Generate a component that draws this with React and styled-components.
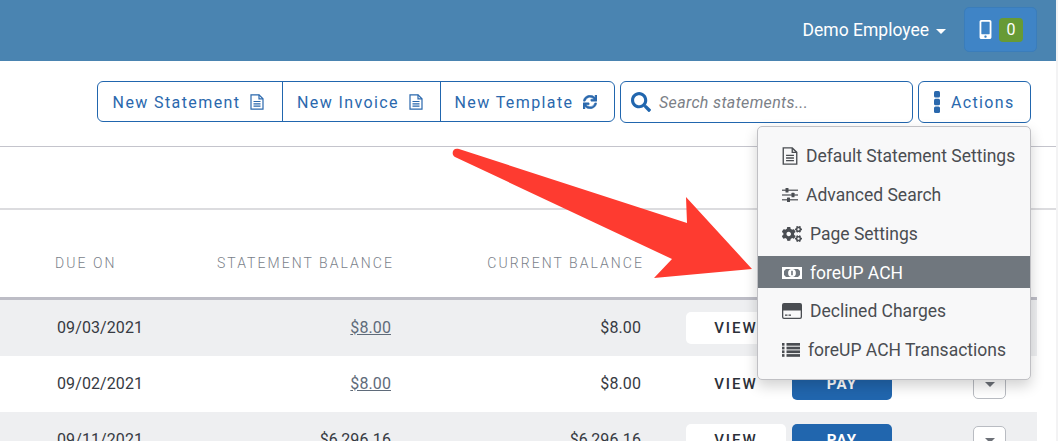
import React from "react";
import styled, { createGlobalStyle } from "styled-components";
import { FaSync, FaSearch, FaMobileAlt, FaCogs } from "react-icons/fa";

const GlobalStyle = createGlobalStyle`
  html, body {
    margin: 0;
    padding: 0;
    background: #fff;
    font-family: Roboto, "Liberation Sans", sans-serif;
    overflow: hidden;
  }
  * { box-sizing: border-box; }
`;

const Page = styled.div`
  position: relative;
  width: 1058px;
  height: 441px;
  overflow: hidden;
  background: #f3f3f4;
`;

const Main = styled.div`
  width: 1056px;
  height: 441px;
  background: #fff;
`;

const TopBar = styled.header`
  display: flex;
  align-items: center;
  justify-content: flex-end;
  height: 61px;
  padding: 0 19px 2px 0;
  background: #4a84b1;
`;

const UserMenu = styled.div`
  display: flex;
  align-items: center;
  gap: 7px;
  margin-right: 18px;
  color: #fff;
  font-size: 17.5px;
`;

const Caret = styled.span`
  width: 0;
  height: 0;
  margin-top: 3px;
  border-left: 5px solid transparent;
  border-right: 5px solid transparent;
  border-top: 5px solid #fff;
`;

const PhoneButton = styled.div`
  display: flex;
  align-items: center;
  width: 73px;
  height: 45px;
  padding-left: 11px;
  gap: 4px;
  color: #fff;
  background: #3f84c6;
  border: 1px solid #3a7dbb;
  border-radius: 5px;
  font-size: 19px;
`;

const CountBadge = styled.span`
  display: flex;
  align-items: center;
  justify-content: center;
  width: 24px;
  height: 24px;
  font-size: 16px;
  background: #679a35;
  border-radius: 4px;
`;

const Toolbar = styled.div`
  display: flex;
  align-items: flex-start;
  height: 86px;
  padding: 20px 0 0 97px;
  border-bottom: 1px solid #c4c4cc;
`;

const ButtonGroup = styled.div`
  display: flex;
  height: 41px;
  border: 1px solid #2166ae;
  border-radius: 6px;
`;

const GroupButton = styled.div`
  display: flex;
  align-items: center;
  justify-content: center;
  gap: 10px;
  width: ${(p) => p.$width}px;
  padding: 1px 3px 0 0;
  color: #2a68ad;
  font-size: 16px;
  letter-spacing: 1.4px;
  & + & { border-left: 1px solid #2166ae; }
  svg { flex: none; }
`;

const SearchBox = styled.div`
  display: flex;
  align-items: center;
  gap: 8px;
  width: 293px;
  height: 42px;
  margin-left: 5px;
  padding-left: 10px;
  color: #7b8087;
  border: 1px solid #2166ae;
  border-radius: 6px;
  font-size: 16px;
  font-style: italic;
  letter-spacing: 0.35px;
  svg { color: #2166ae; font-size: 20px; flex: none; }
`;

const ActionsButton = styled.div`
  display: flex;
  align-items: center;
  gap: 11px;
  width: 113px;
  height: 42px;
  margin-left: 5px;
  padding-left: 15px;
  color: #2a68ad;
  border: 1px solid #2166ae;
  border-radius: 6px;
  font-size: 16px;
  letter-spacing: 1.35px;
  svg { flex: none; }
`;

const Band = styled.div`
  height: 63px;
  border-bottom: 2px solid #dcdcdf;
`;

const HeadRow = styled.div`
  display: grid;
  grid-template-columns: 55px 117px 222px 250px;
  align-items: center;
  width: 1037px;
  height: 90px;
  padding-top: 18px;
  border-bottom: 3px solid #bdbdc6;
  color: #7a7f8a;
  font-size: 14px;
  font-weight: 300;
  letter-spacing: 2.05px;
`;

const HeadCell = styled.div`
  grid-column: ${(p) => p.$col};
  text-align: ${(p) => (p.$right ? "right" : "left")};
  white-space: nowrap;
`;

const Row = styled.div`
  display: grid;
  grid-template-columns: 57px 114px 220px 250px 45px 100px 6px 100px 81px 33px;
  align-items: center;
  width: 1037px;
  height: 56px;
  background: ${(p) => (p.$alt ? "#eeeff1" : "#fff")};
  color: #363a42;
  font-size: 16px;
  letter-spacing: 0.1px;
`;

const DateCell = styled.div`
  grid-column: 2;
  padding-bottom: 2px;
  white-space: nowrap;
`;

const Amount = styled.div`
  grid-column: ${(p) => p.$col};
  padding-bottom: 2px;
  text-align: right;
  color: ${(p) => (p.$link ? "#5f6b7a" : "#363a42")};
  text-decoration: ${(p) => (p.$link ? "underline" : "none")};
`;

const ViewButton = styled.div`
  grid-column: 6;
  display: flex;
  align-items: center;
  justify-content: center;
  height: 32px;
  background: ${(p) => (p.$alt ? "#fff" : "transparent")};
  border-radius: 5px;
  color: #2b3038;
  font-size: 15px;
  font-weight: 500;
  letter-spacing: 2px;
`;

const PayButton = styled.div`
  grid-column: 8;
  display: flex;
  align-items: center;
  justify-content: center;
  height: 32px;
  background: #2166ae;
  border-radius: 5px;
  color: #fff;
  font-size: 15px;
  font-weight: 700;
  letter-spacing: 1.2px;
`;

const MoreButton = styled.div`
  grid-column: 10;
  display: flex;
  align-items: center;
  justify-content: center;
  height: 29px;
  background: #fff;
  border: 1px solid #b9bcc2;
  border-radius: 5px;
`;

const MoreCaret = styled.span`
  width: 0;
  height: 0;
  border-left: 5px solid transparent;
  border-right: 5px solid transparent;
  border-top: 5px solid #6d7178;
`;

const Menu = styled.div`
  position: absolute;
  top: 126px;
  left: 757px;
  display: flex;
  flex-direction: column;
  gap: 7px;
  width: 274px;
  height: 254px;
  padding-top: 12px;
  background: #f8f8f9;
  border: 1px solid #c0c0c4;
  border-radius: 5px;
  box-shadow: 0 6px 14px rgba(0, 0, 0, 0.18);
`;

const MenuItem = styled.div`
  display: flex;
  align-items: center;
  gap: 8px;
  height: 32px;
  padding: 1px 0 0 24px;
  color: ${(p) => (p.$active ? "#fff" : "#4a4d52")};
  background: ${(p) => (p.$active ? "#70777e" : "transparent")};
  font-size: 17.5px;
  white-space: nowrap;
  svg { flex: none; }
  &:nth-child(5) { margin-top: -1px; }
`;

const ArrowSvg = styled.svg`
  position: absolute;
  top: 0;
  left: 0;
  pointer-events: none;
`;

const FileIcon = ({ size = 14, height = 16 }) => (
  <svg width={size} height={height} viewBox="0 0 14 16" fill="none" stroke="currentColor" strokeWidth="1.2">
    <path d="M1 .8h8l4 4v10.4H1z" />
    <path d="M9 .8v4h4" />
    <path d="M3.5 7.5h7M3.5 9.8h7M3.5 12.1h7" />
  </svg>
);

const DotsIcon = () => (
  <svg width="6" height="22" viewBox="0 0 6 22" fill="currentColor">
    <rect width="6" height="6.4" rx="1.5" />
    <rect y="7.8" width="6" height="6.4" rx="1.5" />
    <rect y="15.6" width="6" height="6.4" rx="1.5" />
  </svg>
);

const SlidersIcon = () => (
  <svg width="16" height="14" viewBox="0 0 16 14" fill="currentColor">
    <rect y="1.6" width="16" height="1.2" />
    <rect y="6.4" width="16" height="1.2" />
    <rect y="11.2" width="16" height="1.2" />
    <rect x="3.5" y="0" width="3" height="4.4" rx="0.5" />
    <rect x="9.5" y="4.8" width="3" height="4.4" rx="0.5" />
    <rect x="5" y="9.6" width="3" height="4.4" rx="0.5" />
  </svg>
);

const MoneyIcon = () => (
  <svg width="20" height="12" viewBox="0 0 20 12">
    <rect width="20" height="12" fill="currentColor" />
    <path d="M4 2h12l2 2v4l-2 2H4L2 8V4z" fill="#70777e" />
    <circle cx="10" cy="6" r="3.9" fill="currentColor" />
    <rect x="9.2" y="3.8" width="1.6" height="4.4" fill="#70777e" />
  </svg>
);

const CardIcon = () => (
  <svg width="20" height="16" viewBox="0 0 20 16" fill="currentColor">
    <path fillRule="evenodd" d="M2 0h16a2 2 0 0 1 2 2v12a2 2 0 0 1-2 2H2a2 2 0 0 1-2-2V2a2 2 0 0 1 2-2zm-.7 7.5V14c0 .4.3.7.7.7h16c.4 0 .7-.3.7-.7V7.5z" />
    <rect x="3" y="11.5" width="2.5" height="1.3" />
    <rect x="6.5" y="11.5" width="2.5" height="1.3" />
  </svg>
);

const ListIcon = () => (
  <svg width="18" height="14" viewBox="0 0 18 14" fill="currentColor">
    {[0, 3.7, 7.4, 11.1].map((y) => (
      <g key={y}>
        <rect y={y} width="2.5" height="2.7" />
        <rect x="4.5" y={y} width="13.5" height="2.7" />
      </g>
    ))}
  </svg>
);

const rows = [
  { date: "09/03/2021", statement: "$8.00", current: "$8.00", link: true, alt: true },
  { date: "09/02/2021", statement: "$8.00", current: "$8.00", link: true, alt: false },
  { date: "09/11/2021", statement: "$6,296.16", current: "$6,296.16", link: false, alt: true },
];

const App = () => {
  return (
    <Page>
      <GlobalStyle />
      <Main>
        <TopBar>
          <UserMenu>
            Demo Employee
            <Caret />
          </UserMenu>
          <PhoneButton>
            <FaMobileAlt />
            <CountBadge>0</CountBadge>
          </PhoneButton>
        </TopBar>

        <Toolbar>
          <ButtonGroup>
            <GroupButton $width={184}>New Statement <FileIcon /></GroupButton>
            <GroupButton $width={158}>New Invoice <FileIcon /></GroupButton>
            <GroupButton $width={174}>New Template <FaSync size={14} stroke="currentColor" strokeWidth={20} /></GroupButton>
          </ButtonGroup>
          <SearchBox>
            <FaSearch />
            Search statements...
          </SearchBox>
          <ActionsButton>
            <DotsIcon />
            Actions
          </ActionsButton>
        </Toolbar>

        <Band />

        <HeadRow>
          <HeadCell $col="2">DUE ON</HeadCell>
          <HeadCell $col="3" $right>STATEMENT BALANCE</HeadCell>
          <HeadCell $col="4" $right>CURRENT BALANCE</HeadCell>
        </HeadRow>

        {rows.map((row) => (
          <Row key={row.date} $alt={row.alt}>
            <DateCell>{row.date}</DateCell>
            <Amount $col="3" $link={row.link}>{row.statement}</Amount>
            <Amount $col="4">{row.current}</Amount>
            <ViewButton $alt={row.alt}>VIEW</ViewButton>
            <PayButton>PAY</PayButton>
            <MoreButton><MoreCaret /></MoreButton>
          </Row>
        ))}
      </Main>

      <Menu>
        <MenuItem><FileIcon size={16} height={18} />Default Statement Settings</MenuItem>
        <MenuItem><SlidersIcon />Advanced Search</MenuItem>
        <MenuItem><FaCogs size={20} />Page Settings</MenuItem>
        <MenuItem $active><MoneyIcon />foreUP ACH</MenuItem>
        <MenuItem><CardIcon />Declined Charges</MenuItem>
        <MenuItem><ListIcon />foreUP ACH Transactions</MenuItem>
      </Menu>

      <ArrowSvg width="1058" height="441" viewBox="0 0 1058 441">
        <path
          d="M459 149 L687 223 L686 197 L752 269 L654 278 L672 259 L455 157 C451 155 452 147 459 149 Z"
          fill="#fe3b30"
        />
      </ArrowSvg>
    </Page>
  );
};

export default App;
